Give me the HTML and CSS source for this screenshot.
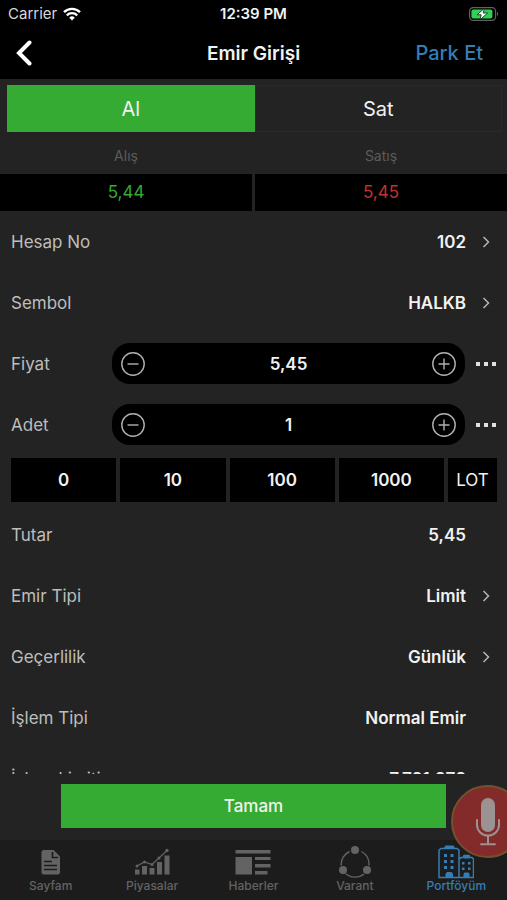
FILE: index.html
```html
<!DOCTYPE html>
<html lang="tr">
<head>
  <meta charset="UTF-8" />
  <meta name="viewport" content="width=device-width, initial-scale=1.0" />
  <title>Emir Girişi</title>
  <link rel="stylesheet" href="styles.css">
</head>
<body>
  <header>
    <div class="status-bar">
      <div class="carrier">
        <span>Carrier</span>
        <svg width="18" height="14" viewBox="0 0 18 14" fill="none" stroke="#fff" stroke-width="2.4">
          <path d="M1 5.2a11.4 11.4 0 0 1 16 0" />
          <path d="M3.8 8.3a7.4 7.4 0 0 1 10.4 0" />
          <path d="M9 13.6l-2.8-2.9a4 4 0 0 1 5.6 0z" fill="#fff" stroke="none" />
        </svg>
      </div>
      <strong class="clock">12:39 PM</strong>
      <div class="battery">
        <svg width="30" height="14" viewBox="0 0 30 14">
          <rect x="0.6" y="0.6" width="26" height="12.8" rx="3.6" fill="none" stroke="#626262" stroke-width="1.2" />
          <rect x="2.4" y="2.4" width="21" height="9.2" rx="2" fill="#31d158" />
          <path d="M28 4.8a2.6 2.6 0 0 1 0 4.4z" fill="#626262" />
          <path d="M15.6 1.2L8 7.8h4.200l-1.200 5 7.600-6.800h-4.400z" fill="#fff" stroke="#06200c" stroke-width="0.8" />
        </svg>
      </div>
    </div>
    <nav class="title-bar">
      <button class="back" aria-label="Geri">
        <svg width="16" height="26" viewBox="0 0 16 26" fill="none" stroke="#fff" stroke-width="4" stroke-linecap="round">
          <path d="M13.5 2.5L3 13l10.5 10.5" />
        </svg>
      </button>
      <h1>Emir Girişi</h1>
      <a class="park" href="#park">Park Et</a>
    </nav>
  </header>

  <main>
    <div class="segment">
      <button class="active">Al</button>
      <button>Sat</button>
    </div>

    <div class="quotes">
      <div class="quote">
        <span class="quote-label">Alış</span>
        <span class="quote-price buy">5,44</span>
      </div>
      <div class="quote">
        <span class="quote-label">Satış</span>
        <span class="quote-price sell">5,45</span>
      </div>
    </div>

    <a class="row" href="#hesap">
      <span class="label">Hesap No</span>
      <span class="value">102</span>
      <svg class="chevron" viewBox="0 0 8 12"><path d="M1.5 1L6.5 6l-5 5" /></svg>
    </a>
    <a class="row" href="#sembol">
      <span class="label">Sembol</span>
      <span class="value">HALKB</span>
      <svg class="chevron" viewBox="0 0 8 12"><path d="M1.5 1L6.5 6l-5 5" /></svg>
    </a>

    <div class="row stepper-row">
      <label class="label" for="fiyat">Fiyat</label>
      <div class="stepper">
        <button aria-label="Fiyat azalt"><svg viewBox="0 0 24 24"><circle cx="12" cy="12" r="11.2" /><path d="M6.5 12h11" /></svg></button>
        <input type="text" id="fiyat" value="5,45" />
        <button aria-label="Fiyat artır"><svg viewBox="0 0 24 24"><circle cx="12" cy="12" r="11.2" /><path d="M6.5 12h11M12 6.5v11" /></svg></button>
      </div>
      <button class="more" aria-label="Fiyat seçenekleri"><svg viewBox="0 0 20 4"><path d="M0 0h4v4H0zM8 0h4v4H8zM16 0h4v4h-4z" /></svg></button>
    </div>
    <div class="row stepper-row">
      <label class="label" for="adet">Adet</label>
      <div class="stepper">
        <button aria-label="Adet azalt"><svg viewBox="0 0 24 24"><circle cx="12" cy="12" r="11.2" /><path d="M6.5 12h11" /></svg></button>
        <input type="text" id="adet" value="1" />
        <button aria-label="Adet artır"><svg viewBox="0 0 24 24"><circle cx="12" cy="12" r="11.2" /><path d="M6.5 12h11M12 6.5v11" /></svg></button>
      </div>
      <button class="more" aria-label="Adet seçenekleri"><svg viewBox="0 0 20 4"><path d="M0 0h4v4H0zM8 0h4v4H8zM16 0h4v4h-4z" /></svg></button>
    </div>

    <div class="lots">
      <button>0</button>
      <button>10</button>
      <button>100</button>
      <button>1000</button>
      <button class="lot">LOT</button>
    </div>

    <div class="row">
      <span class="label">Tutar</span>
      <span class="value">5,45</span>
    </div>
    <a class="row" href="#emir-tipi">
      <span class="label">Emir Tipi</span>
      <span class="value">Limit</span>
      <svg class="chevron" viewBox="0 0 8 12"><path d="M1.5 1L6.5 6l-5 5" /></svg>
    </a>
    <a class="row" href="#gecerlilik">
      <span class="label">Geçerlilik</span>
      <span class="value">Günlük</span>
      <svg class="chevron" viewBox="0 0 8 12"><path d="M1.5 1L6.5 6l-5 5" /></svg>
    </a>
    <div class="row">
      <span class="label">İşlem Tipi</span>
      <span class="value">Normal Emir</span>
    </div>
    <div class="row">
      <span class="label">İşlem Limiti</span>
      <span class="value">7.721.272</span>
    </div>
  </main>

  <div class="submit-area">
    <button class="submit">Tamam</button>
  </div>

  <footer>
    <a href="#sayfam">
      <svg width="36" height="34" viewBox="0 0 36 34" fill="#636363">
        <path d="M11 5h9.5l6.500 6.500V27a2.500 2.500 0 0 1-2.500 2.500H11A2.500 2.500 0 0 1 8.500 27V7.500A2.500 2.500 0 0 1 11 5z" />
        <path d="M19.500 7v5.500H25M11 16.500h8M11 20.500h13M11 24.500h13" fill="none" stroke="#1c1c1c" stroke-width="1.7" />
      </svg>
      <span>Sayfam</span>
    </a>
    <a href="#piyasalar">
      <svg width="36" height="34" viewBox="0 0 36 34" fill="#636363">
        <path d="M1 24.500h4.500v5H1zM8 21h5v8.500H8zM15.500 23h5v6.500h-5zM23 17h5v12.500h-5zM30.500 10.500h5v19h-5z" />
        <path d="M3 21l7.500-4 7.500 2.500 7-6.500 8-7.500" fill="none" stroke="#636363" stroke-width="1.2" />
        <circle cx="3" cy="21" r="1.5" /><circle cx="10.5" cy="17" r="1.5" /><circle cx="18" cy="19.5" r="1.5" /><circle cx="25" cy="13" r="1.5" /><circle cx="33" cy="5.5" r="1.7" />
      </svg>
      <span>Piyasalar</span>
    </a>
    <a href="#haberler">
      <svg width="36" height="34" viewBox="0 0 36 34" fill="#636363">
        <path d="M.5 5h35v3.500H.5zM.5 12H17v17.500H.5zM20 12h15.500v3H20zM20 19h15.500v3.500H20zM20 26h12.500v3.500H20z" />
      </svg>
      <span>Haberler</span>
    </a>
    <a href="#varant">
      <svg width="36" height="34" viewBox="0 0 36 34" fill="#636363">
        <path d="M12.500 6.500A14.300 14.300 0 0 0 4.200 20.500M24.500 6.500a14.300 14.300 0 0 1 7.500 14M8.500 28.500a14.300 14.300 0 0 0 18.500.5" fill="none" stroke="#636363" stroke-width="1.4" />
        <circle cx="18" cy="5" r="4" /><circle cx="6" cy="25" r="4" /><circle cx="30" cy="25" r="4" />
      </svg>
      <span>Varant</span>
    </a>
    <a class="active" href="#portfoyum">
      <svg width="36" height="34" viewBox="0 0 36 34" fill="#357eb5">
        <path d="M1 32.500V5l2-1.500h3.500L8 1.200h7l1.500 2.300H19L21 5v27.500zM21.500 14l1.500-1.500h2l1-2h5l1 2h2l1.500 1.500v18.500H21.500" fill="none" stroke="#357eb5" stroke-width="1.5" />
        <path d="M6 9h3v3H6zM12.500 9h3v3h-3zM6 15h3v3H6zM12.500 15h3v3h-3zM6 21h3v3H6zM12.500 21h3v3h-3zM7.500 32.500V29L9 27h4.500l1.500 2v3.500zM24 17h2.500v2.500H24zM30 17h2.500v2.500H30zM24 22.500h2.500V25H24zM30 22.500h2.500V25H30zM25.500 32.500V29l1-1.500h4l1 1.500v3.500zM7 1.200h9v3H7zM25.500 10.500h6v3h-6z" />
      </svg>
      <span>Portföyüm</span>
    </a>
  </footer>

  <button class="mic" aria-label="Sesli komut">
    <svg width="24" height="50" viewBox="0 0 24 50" fill="none" stroke="#9c9292" stroke-width="2">
      <rect x="5" y="1" width="14" height="34" rx="7" fill="#9c9292" stroke="none" />
      <path d="M1 23v5a11 10.500 0 0 0 22 0v-5M12 38.500V47M5 47.300h14" stroke-linecap="round" />
    </svg>
  </button>
</body>
</html>
```
FILE: styles.css
```css
:root {
  --zemin: #232323;
  --yesil: #35ab33;
  --kirmizi: #c13232;
  --mavi: #357eb5;
  --gri: #636363;
}

* {
  box-sizing: border-box;
  margin: 0;
  padding: 0;
}

body {
  position: relative;
  height: 100dvh;
  overflow: hidden;
  display: flex;
  flex-direction: column;
  font-family: Inter, 'Liberation Sans', sans-serif;
  font-size: 17px;
  background: var(--zemin);
  color: #f2f2f2;
}

button, input {
  font: inherit;
  color: inherit;
  background: none;
  border: none;
  border-radius: 0;
  outline: none;
}

button {
  cursor: pointer;
}

a {
  color: inherit;
  text-decoration: none;
}

svg {
  display: block;
}

header {
  background: #000;
}

.status-bar,
.title-bar {
  display: grid;
  grid-template-columns: 1fr auto 1fr;
  align-items: center;
}

.status-bar {
  height: 27px;
  padding: 0 8px;
  font-size: 15px;
}

.carrier {
  display: flex;
  align-items: center;
  gap: 6px;
  color: #d8d8d8;
}

.clock {
  font-weight: 600;
}

.battery {
  justify-self: end;
}

.title-bar {
  height: 52px;
  padding: 0 16px;
}

.back {
  justify-self: start;
}

.title-bar h1 {
  font-size: 19px;
  font-weight: 600;
}

.park {
  justify-self: end;
  padding-right: 8px;
  font-size: 20px;
  font-weight: 500;
  color: var(--mavi);
}

main {
  flex: 1;
  min-height: 0;
  overflow: hidden;
}

.segment {
  display: grid;
  grid-template-columns: 1fr 1fr;
  margin: 6px 5px 0 7px;
  height: 47px;
}

.segment button {
  border: 1px solid #292929;
  font-size: 20px;
}

.segment .active {
  border-color: var(--yesil);
  background: var(--yesil);
}

.quotes {
  display: grid;
  grid-template-columns: 1fr 1fr;
  gap: 3px;
  text-align: center;
}

.quote-label,
.quote-price {
  display: block;
}

.quote-label {
  padding-top: 6px;
  font-size: 14px;
  line-height: 36px;
  color: #5c5c5c;
}

.quote-price {
  background: #000;
  line-height: 37px;
}

.buy {
  color: var(--yesil);
}

.sell {
  color: var(--kirmizi);
}

.row {
  display: flex;
  align-items: center;
  height: 61px;
  padding: 0 41px 0 11px;
}

a.row {
  padding-right: 17px;
}

.label {
  flex: 1;
  color: #bdbdbd;
}

.value {
  font-weight: 600;
}

.chevron {
  width: 8px;
  height: 12px;
  margin-left: 16px;
  fill: none;
  stroke: #b5b5b5;
  stroke-width: 1.5;
}

.stepper-row {
  padding-right: 11px;
}

.stepper-row .label {
  flex: 0 0 101px;
}

.stepper {
  flex: 1;
  display: flex;
  align-items: center;
  height: 41px;
  padding: 0 9px;
  border-radius: 18px;
  background: #000;
}

.stepper svg {
  width: 24px;
  height: 24px;
  fill: none;
  stroke: #b0b0b0;
  stroke-width: 1.4;
}

.stepper input {
  flex: 1;
  min-width: 0;
  text-align: center;
  font-weight: 600;
}

.more {
  margin-left: 11px;
}

.more svg {
  width: 20px;
  height: 4px;
  fill: #e0e0e0;
}

.lots {
  display: grid;
  grid-template-columns: repeat(4, 1fr) 49px;
  gap: 4px;
  margin: 3px 10px 2px 11px;
}

.lots button {
  height: 44px;
  background: #000;
  font-weight: 600;
}

.lots .lot {
  font-weight: 400;
}

.submit-area {
  padding: 10px 12% 12px;
}

.submit {
  display: block;
  width: 100%;
  height: 44px;
  background: var(--yesil);
  font-weight: 500;
}

footer {
  display: grid;
  grid-template-columns: repeat(5, 1fr);
  height: 60px;
  padding-top: 5px;
  background: #1c1c1c;
  color: var(--gri);
  font-size: 12px;
  line-height: 14px;
  font-weight: 500;
}

footer a {
  display: flex;
  flex-direction: column;
  align-items: center;
}

footer .active {
  color: var(--mavi);
}

.mic {
  position: absolute;
  right: -17px;
  bottom: 42px;
  display: flex;
  justify-content: center;
  align-items: center;
  width: 73px;
  height: 73px;
  border: 2px solid #74502f;
  border-radius: 50%;
  background: #832b2b;
}
```
